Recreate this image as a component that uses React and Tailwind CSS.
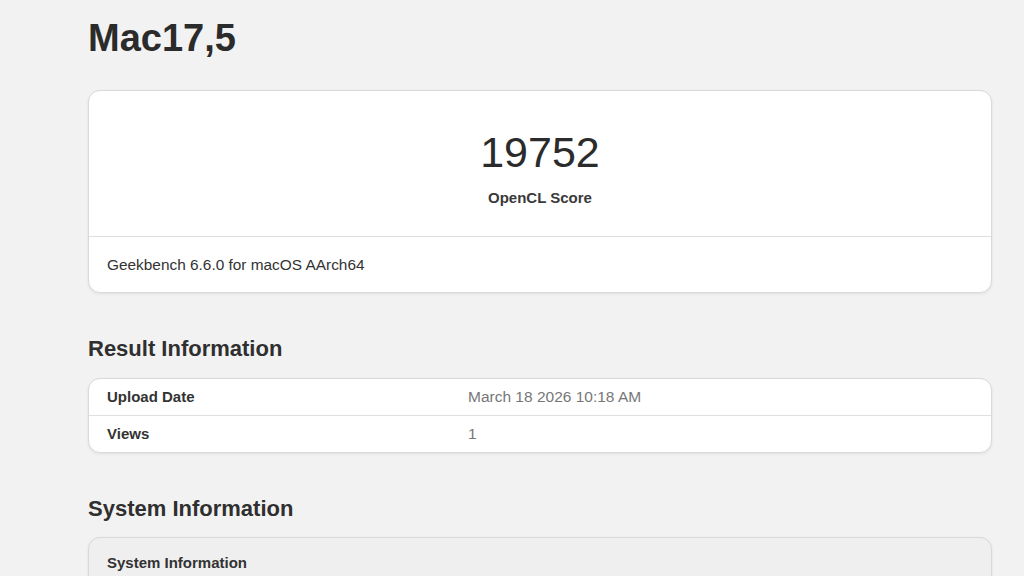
const resultRows = [
  { label: 'Upload Date', value: 'March 18 2026 10:18 AM' },
  { label: 'Views', value: '1' },
];

const cardClass =
  'bg-white border border-[#d9d9d9] rounded-[12px] shadow-[0_1px_3px_rgba(0,0,0,0.08)] overflow-hidden';

export default function App() {
  return (
    <div
      className="min-h-screen bg-[#f2f2f2] pl-[88px] pr-[32px] pt-[15px] text-[#333333]"
      style={{ fontFamily: '"Liberation Sans", Arial, sans-serif' }}
    >
      <h1 className="text-[38px] leading-[46px] font-bold text-[#2b2b2b]">Mac17,5</h1>

      {/* Score card */}
      <div className={`${cardClass} mt-[29px]`}>
        <div className="flex flex-col items-center pt-[35px] pb-[28px]">
          <div className="text-[43px] leading-[52px] text-[#2b2b2b]">19752</div>
          <div className="mt-[10px] text-[15px] leading-[20px] font-bold text-[#3a3a3a]">OpenCL Score</div>
        </div>
        <div className="border-t border-[#dedede] px-[18px] pt-[18px] pb-[17px] text-[15.4px] leading-[20px] text-[#333333]">
          Geekbench 6.6.0 for macOS AArch64
        </div>
      </div>

      {/* Result Information */}
      <h2 className="mt-[42px] text-[22px] leading-[28px] font-bold text-[#2f2f2f]">Result Information</h2>
      <div className={`${cardClass} mt-[15px]`}>
        {resultRows.map((row, i) => (
          <div
            key={row.label}
            className={`grid grid-cols-[361px_1fr] items-center h-[36px] px-[18px] text-[15px] ${
              i > 0 ? 'border-t border-[#e0e0e0] h-[37px]' : ''
            }`}
          >
            <span className="font-bold text-[#333333]">{row.label}</span>
            <span className="text-[15.5px] text-[#777777]">{row.value}</span>
          </div>
        ))}
      </div>

      {/* System Information */}
      <h2 className="mt-[42px] text-[22px] leading-[28px] font-bold text-[#2f2f2f]">System Information</h2>
      <div className="mt-[14px] bg-[#efefef] border border-[#d9d9d9] rounded-t-[12px] shadow-[0_1px_3px_rgba(0,0,0,0.08)]">
        <div className="flex items-center h-[50px] px-[18px] text-[15px] font-bold text-[#333333]">
          System Information
        </div>
      </div>
    </div>
  );
}
